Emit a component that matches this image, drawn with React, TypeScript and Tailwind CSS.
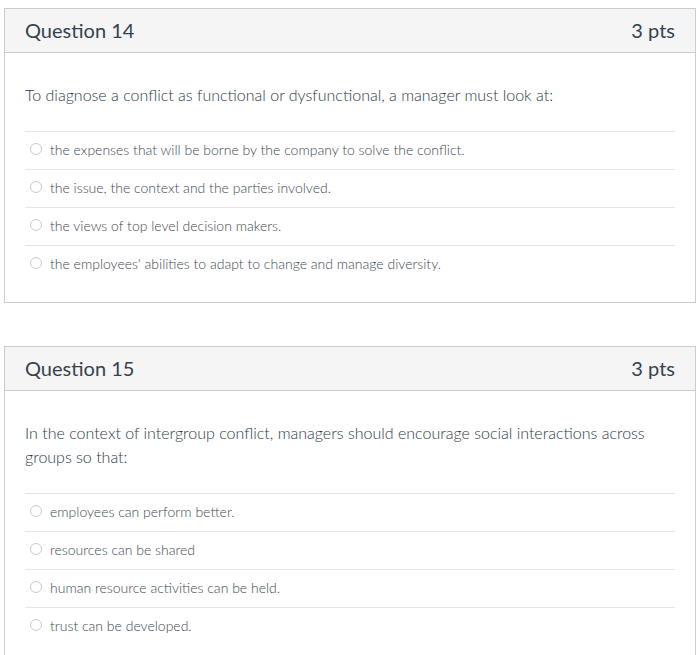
import React from "react"

interface Question {
  title: string
  points: string
  text: string
  answers: string[]
}

const QUESTIONS: Question[] = [
  {
    title: "Question 14",
    points: "3 pts",
    text: "To diagnose a conflict as functional or dysfunctional, a manager must look at:",
    answers: [
      "the expenses that will be borne by the company to solve the conflict.",
      "the issue, the context and the parties involved.",
      "the views of top level decision makers.",
      "the employees' abilities to adapt to change and manage diversity.",
    ],
  },
  {
    title: "Question 15",
    points: "3 pts",
    text: "In the context of intergroup conflict, managers should encourage social interactions across groups so that:",
    answers: [
      "employees can perform better.",
      "resources can be shared",
      "human resource activities can be held.",
      "trust can be developed.",
    ],
  },
]

function QuestionCard({ q }: { q: Question }) {
  return (
    <div className="w-[692px] ml-[4px] border border-[#c7cdd1] bg-white">
      {/* Header */}
      <div className="flex items-center justify-between h-[44px] px-5 pb-[2px] bg-[#f5f5f5] border-b border-[#c7cdd1]">
        <span className="text-[20px] text-[#34434e]">{q.title}</span>
        <span className="text-[20px] text-[#34434e]">{q.points}</span>
      </div>

      {/* Body */}
      <div className="px-5 pt-[30px] pb-[19px]">
        <p className="text-[16px] leading-6 font-light text-[#2d3b45] mb-[24px] pr-6">{q.text}</p>
        <div>
          {q.answers.map((a) => (
            <label
              key={a}
              className="flex items-center gap-[8px] h-[38px] pl-[5px] pb-[3px] border-t border-[#e3e6e8] text-[14px] font-light text-[#3d4850]"
            >
              <span className="size-[12px] rounded-full border border-[#c6cbcf] bg-white shrink-0" />
              <span>{a}</span>
            </label>
          ))}
        </div>
      </div>
    </div>
  )
}

export default function App() {
  return (
    <div className="w-[698px] h-[655px] overflow-hidden bg-white pt-[8px] font-['Lato',sans-serif]">
      <div className="flex flex-col gap-[43px]">
        {QUESTIONS.map((q) => (
          <QuestionCard key={q.title} q={q} />
        ))}
      </div>
    </div>
  )
}
